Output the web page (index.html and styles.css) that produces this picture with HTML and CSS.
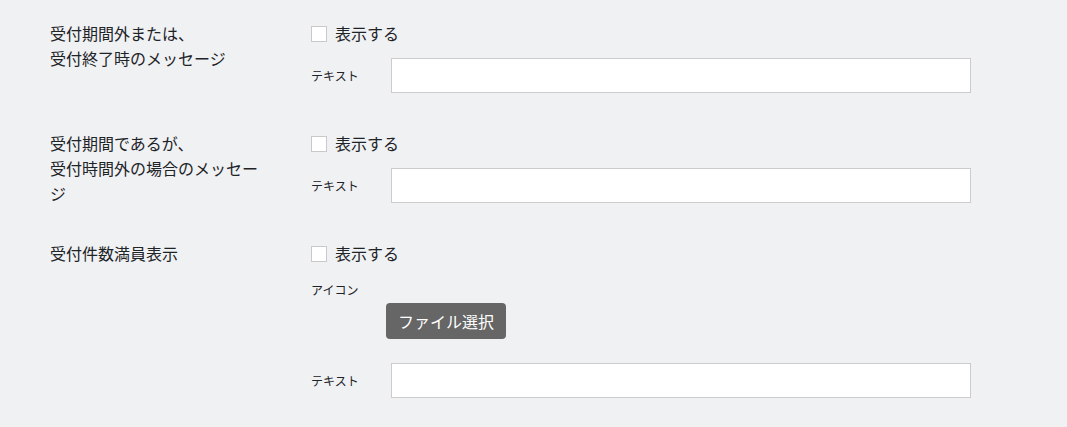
FILE: index.html
```html
<!DOCTYPE html>
<html lang="ja">
<head>
<meta charset="utf-8">
<link rel="stylesheet" href="styles.css">
</head>
<body>
<div class="settings">
  <div class="row">
    <div class="row-label">受付期間外または、<br>受付終了時のメッセージ</div>
    <div class="row-body">
      <label class="check"><input type="checkbox" class="check-box"><span>表示する</span></label>
      <div class="field">
        <span class="field-label">テキスト</span>
        <input type="text" class="text-input">
      </div>
    </div>
  </div>
  <div class="row">
    <div class="row-label">受付期間であるが、<br>受付時間外の場合のメッセージ</div>
    <div class="row-body">
      <label class="check"><input type="checkbox" class="check-box"><span>表示する</span></label>
      <div class="field">
        <span class="field-label">テキスト</span>
        <input type="text" class="text-input">
      </div>
    </div>
  </div>
  <div class="row">
    <div class="row-label">受付件数満員表示</div>
    <div class="row-body">
      <label class="check"><input type="checkbox" class="check-box"><span>表示する</span></label>
      <div class="icon-label">アイコン</div>
      <button type="button" class="file-button">ファイル選択</button>
      <div class="field field-last">
        <span class="field-label">テキスト</span>
        <input type="text" class="text-input">
      </div>
    </div>
  </div>
</div>
</body>
</html>
```
FILE: styles.css
```css
html, body {
  margin: 0;
  padding: 0;
  background: #f0f1f3;
}
body {
  font-family: "Noto Sans CJK JP", "Noto Sans", sans-serif;
  color: #1d2327;
  font-size: 16px;
}
.settings {
  padding-top: 21px;
  padding-left: 50px;
  display: flex;
  flex-direction: column;
}
.row {
  display: flex;
  align-items: flex-start;
}
.row-label {
  width: 214px;
  margin-right: 47px;
  font-size: 16px;
  line-height: 25px;
}
.row-body {
  display: flex;
  flex-direction: column;
  align-items: flex-start;
  padding-bottom: 38px;
}
.check {
  display: flex;
  align-items: center;
  height: 25px;
  line-height: 25px;
  font-size: 16px;
}
.check-box {
  appearance: none;
  -webkit-appearance: none;
  margin: 1px 8px 0 0;
  width: 16px;
  height: 16px;
  box-sizing: border-box;
  border: 1px solid #c9c9c9;
  background: #fff;
  border-radius: 0;
}
.field {
  display: flex;
  align-items: center;
  margin-top: 12px;
}
.field-last {
  margin-top: 24px;
}
.field-label {
  width: 80px;
  font-size: 12px;
  line-height: 18px;
}
.text-input {
  box-sizing: border-box;
  width: 580px;
  height: 35px;
  margin: 0;
  border: 1px solid #cccccc;
  background: #fff;
  border-radius: 0;
  outline: none;
}
.icon-label {
  margin-top: 15px;
  font-size: 12px;
  line-height: 18px;
}
.file-button {
  margin: 4px 0 0 75px;
  height: 36px;
  padding: 0 12px;
  border: none;
  border-radius: 4px;
  background: #666666;
  color: #fff;
  font-family: "Noto Sans CJK JP", "Noto Sans", sans-serif;
  font-size: 16px;
  line-height: 36px;
}
```
